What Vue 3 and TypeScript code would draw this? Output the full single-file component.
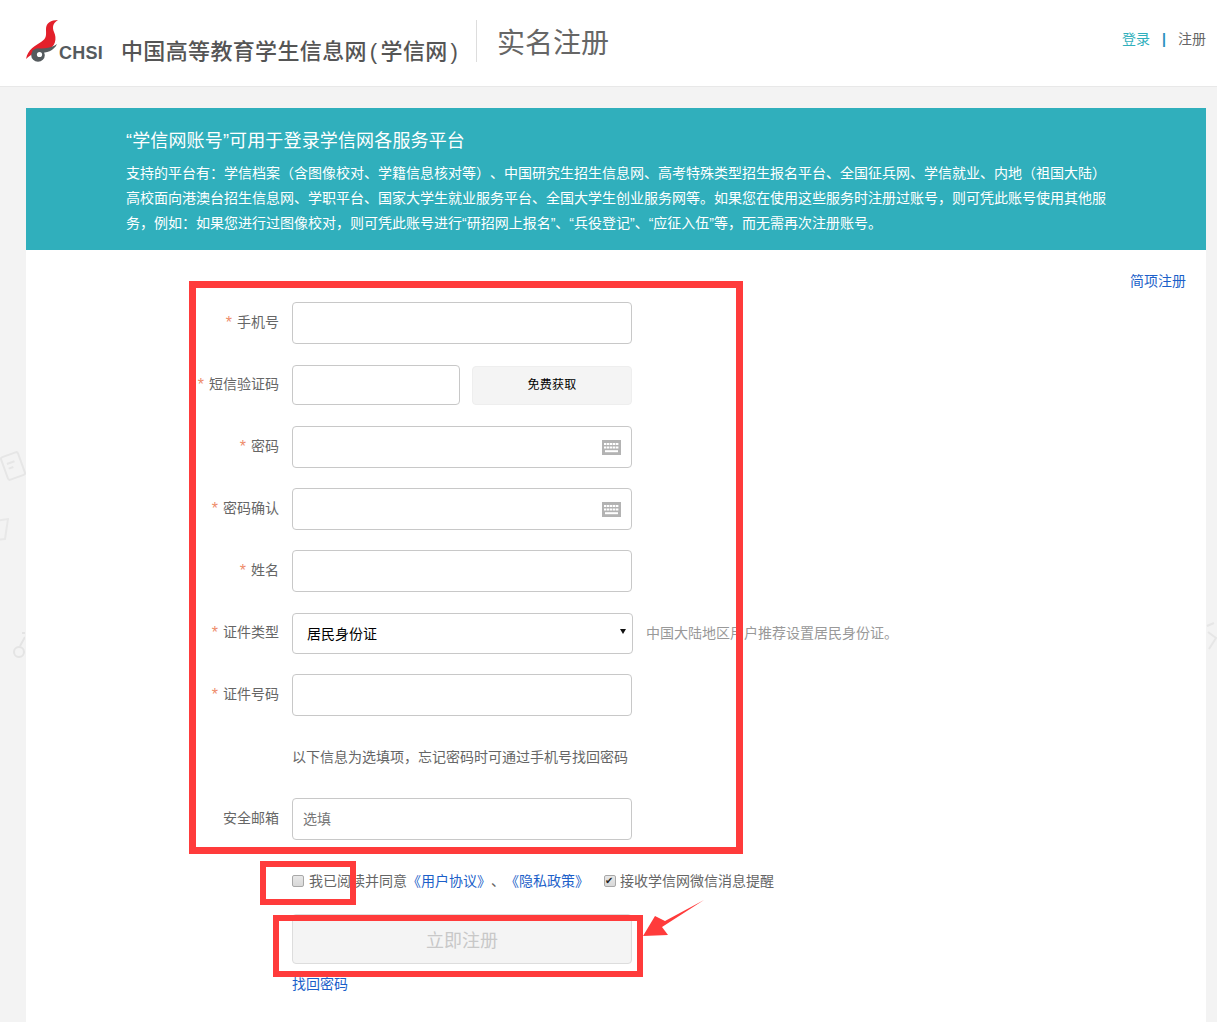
<script setup lang="ts">
interface Row {
  label: string
  required: boolean
  kind: 'text' | 'sms' | 'password' | 'select' | 'note' | 'email'
}

const rows: Row[] = [
  { label: '手机号', required: true, kind: 'text' },
  { label: '短信验证码', required: true, kind: 'sms' },
  { label: '密码', required: true, kind: 'password' },
  { label: '密码确认', required: true, kind: 'password' },
  { label: '姓名', required: true, kind: 'text' },
  { label: '证件类型', required: true, kind: 'select' },
  { label: '证件号码', required: true, kind: 'text' },
  { label: '', required: false, kind: 'note' },
  { label: '安全邮箱', required: false, kind: 'email' },
]

const keyRows = [3, 6.5]
const keyCols = [2, 5, 8, 11, 14]
</script>

<template>
  <div class="page">
    <svg class="deco deco-a" viewBox="0 0 26 34" width="26" height="34">
      <g transform="rotate(-20 13 17)" fill="none" stroke="#e6e6e6" stroke-width="2">
        <rect x="4" y="5" width="18" height="24" rx="2" />
        <path d="M8 13h8M8 18h5" />
      </g>
    </svg>
    <svg class="deco deco-b" viewBox="0 0 9 24" width="9" height="24">
      <path d="M-4 3 8 1 5 21-6 22Z" fill="none" stroke="#e8e8e8" stroke-width="2" />
    </svg>
    <svg class="deco deco-c" viewBox="0 0 12 30" width="12" height="30">
      <circle cx="6" cy="23" r="5" fill="none" stroke="#e4e4e4" stroke-width="2" />
      <path d="M7 17 12 8M9 4h3" fill="none" stroke="#e4e4e4" stroke-width="2" />
    </svg>
    <svg class="deco deco-d" viewBox="0 0 11 30" width="11" height="30">
      <path d="M1 4 8 1M2 10 10 16 3 27" fill="none" stroke="#e6e6e6" stroke-width="2" />
    </svg>

    <header class="topbar">
      <div class="brand">
        <svg class="flame" viewBox="0 0 34 42" width="34" height="42">
          <path d="M32 0C25 0 20 3 20 9c0 6 1 9-5 13C9 26 2 29 0 39c6-6 13-8 20-9 10-2 11-12 8-18-2-5-1-9 4-12Z" fill="#e3202b" />
          <path d="M6 31c8-4 18-1 25-7-3 7-11 9-17 9Z" fill="#555b5e" />
          <circle cx="12" cy="35" r="6.8" fill="#555b5e" />
          <circle cx="13.5" cy="34.5" r="2.6" fill="#fff" />
        </svg>
        <span class="chsi">CHSI</span>
      </div>
      <div class="site-name">中国高等教育学生信息网<span class="paren">(</span>学信网<span class="paren">)</span></div>
      <div class="divider"></div>
      <h1 class="page-title">实名注册</h1>
      <nav class="account">
        <a class="login">登录</a>
        <span class="sep">|</span>
        <a class="reg">注册</a>
      </nav>
    </header>

    <div class="content">
      <section class="banner">
        <h2>“学信网账号”可用于登录学信网各服务平台</h2>
        <p>支持的平台有：学信档案（含图像校对、学籍信息核对等）、中国研究生招生信息网、高考特殊类型招生报名平台、全国征兵网、学信就业、内地（祖国大陆）</p>
        <p>高校面向港澳台招生信息网、学职平台、国家大学生就业服务平台、全国大学生创业服务网等。如果您在使用这些服务时注册过账号，则可凭此账号使用其他服</p>
        <p>务，例如：如果您进行过图像校对，则可凭此账号进行“研招网上报名”、“兵役登记”、“应征入伍”等，而无需再次注册账号。</p>
      </section>

      <main class="panel">
        <div class="quick"><a>简项注册</a></div>

        <form class="form" @submit.prevent>
          <div v-for="row in rows" :key="row.kind + row.label" class="row">
            <label class="label">
              <span v-if="row.required" class="star">*</span>{{ row.label }}
            </label>

            <div v-if="row.kind === 'text'" class="field"><input class="input" type="text" /></div>

            <div v-else-if="row.kind === 'sms'" class="field sms">
              <input class="input short" type="text" />
              <button type="button" class="free">免费获取</button>
            </div>

            <div v-else-if="row.kind === 'password'" class="field">
              <input class="input" type="password" />
              <svg class="kbd" viewBox="0 0 19 15" width="19" height="15">
                <rect width="19" height="15" fill="#b3b3b3" />
                <template v-for="y in keyRows" :key="y">
                  <rect v-for="x in keyCols" :key="x" :x="x" :y="y" width="2.4" height="2" fill="#fff" />
                </template>
                <rect x="3" y="10.2" width="13" height="2" fill="#fff" />
              </svg>
            </div>

            <div v-else-if="row.kind === 'select'" class="field select-field">
              <select class="select">
                <option>居民身份证</option>
              </select>
              <span class="caret"></span>
              <span class="hint">中国大陆地区用户推荐设置居民身份证。</span>
            </div>

            <div v-else-if="row.kind === 'note'" class="note">以下信息为选填项，忘记密码时可通过手机号找回密码</div>

            <div v-else class="field"><input class="input email" type="text" placeholder="选填" /></div>
          </div>

          <div class="agree">
            <input class="check" type="checkbox" />
            <span class="agree-text">我已阅读并同意</span>
            <a class="doc">《用户协议》</a>
            <span class="comma">、</span>
            <a class="doc">《隐私政策》</a>
            <input class="check second" type="checkbox" checked />
            <span class="agree-text">接收学信网微信消息提醒</span>
          </div>

          <button type="button" class="submit" disabled>立即注册</button>
          <a class="recover">找回密码</a>
        </form>
      </main>
    </div>

    <div class="mark mark-form"></div>
    <div class="mark mark-check"></div>
    <div class="mark mark-submit"></div>
    <svg class="arrow" viewBox="0 0 64 40" width="64" height="40">
      <path d="M63 0 24 21 14 16 2 36 27 35 21 27Z" fill="#ff3b3b" />
    </svg>
  </div>
</template>

<style>
html,
body {
  margin: 0;
  background: #f3f3f3;
}
</style>

<style scoped>
.page {
  position: relative;
  display: flex;
  flex-direction: column;
  height: 1022px;
  overflow: hidden;
  background: #f3f3f3;
  font-family: "Liberation Sans", "Noto Sans CJK SC", sans-serif;
  font-size: 14px;
  color: #666;
  text-spacing-trim: space-all;
}

.deco { position: absolute; }
.deco-a { left: 0; top: 449px; }
.deco-b { left: 0; top: 518px; }
.deco-c { left: 13px; top: 629px; }
.deco-d { left: 1206px; top: 622px; }

.topbar {
  display: flex;
  align-items: flex-start;
  box-sizing: border-box;
  height: 87px;
  padding: 0 11px 0 26px;
  background: #fff;
  border-bottom: 1px solid #e8e8e8;
}
.brand {
  display: flex;
  align-items: flex-end;
  width: 96px;
  height: 62px;
  padding-top: 20px;
  box-sizing: border-box;
}
.flame { flex: none; }
.chsi {
  margin: 0 0 0 -1px;
  font-size: 18px;
  font-weight: 700;
  line-height: 20px;
  letter-spacing: 0.25px;
  color: #555b5e;
  transform: translateY(1px);
}
.site-name {
  width: 354px;
  margin: 36px 0 0 -1px;
  padding-right: 1px;
  font-size: 22px;
  line-height: 32px;
  letter-spacing: 0.35px;
  font-weight: 500;
  color: #555;
  white-space: nowrap;
}
.paren {
  margin: 0 3px;
  font-weight: 400;
}
.divider {
  width: 1px;
  height: 42px;
  margin-top: 20px;
  background: #ddd;
}
.page-title {
  margin: 23px 0 0 20px;
  font-size: 28px;
  font-weight: 400;
  line-height: 42px;
  color: #666;
}
.account {
  display: flex;
  gap: 12px;
  margin: 29px 0 0 auto;
  line-height: 20px;
}
.login { color: #30afbc; }
.sep {
  color: #2a8fc0;
  font-weight: 700;
}
.reg { color: #666; }

.content {
  display: flex;
  flex: 1;
  flex-direction: column;
  margin: 21px 11px 0 26px;
  min-height: 0;
}
.banner {
  box-sizing: border-box;
  height: 142px;
  padding: 19px 0 0 100px;
  background: #30afbc;
  color: #fff;
}
.banner h2 {
  margin: 0 0 6px;
  font-size: 18px;
  font-weight: 400;
  line-height: 28px;
  letter-spacing: 0.15px;
}
.banner p {
  margin: 0;
  font-size: 14px;
  line-height: 25px;
  white-space: nowrap;
}

.panel {
  flex: 1;
  background: #fff;
  padding-top: 22px;
}
.quick {
  height: 18px;
  margin-bottom: 12px;
  padding-right: 20px;
  text-align: right;
  line-height: 18px;
}
.quick a { color: #1c5fc9; }

.row {
  display: flex;
  align-items: center;
  height: 42px;
  margin-bottom: 20px;
}
.label {
  flex: none;
  box-sizing: border-box;
  width: 253px;
  margin-right: 13px;
  padding-bottom: 3px;
  text-align: right;
  line-height: 20px;
  white-space: nowrap;
}
.star {
  display: inline-block;
  margin-right: 5px;
  font-size: 16px;
  line-height: 14px;
  color: #ee8c6a;
  transform: translateY(1px);
}
.field {
  position: relative;
  display: flex;
  align-items: center;
  width: 340px;
}
.input {
  display: block;
  box-sizing: border-box;
  width: 340px;
  height: 42px;
  padding: 0 10px;
  background: #fff;
  border: 1px solid #c8c8c8;
  border-radius: 4px;
  outline: none;
  font: inherit;
  color: #333;
}
.input.short {
  width: 168px;
  height: 40px;
  margin-right: 12px;
}
.input.email::placeholder {
  color: #777;
  opacity: 1;
}
.free {
  box-sizing: border-box;
  width: 160px;
  height: 39px;
  padding: 0 0 3px;
  background: #f4f4f4;
  border: 1px solid #eee;
  border-radius: 4px;
  font-family: inherit;
  font-size: 12px;
  letter-spacing: 0.25px;
  color: #000;
}
.kbd {
  position: absolute;
  right: 11px;
  top: 14px;
}
.select-field {
  white-space: nowrap;
}
.select {
  flex: none;
  box-sizing: border-box;
  width: 341px;
  height: 41px;
  margin-top: 1px;
  padding: 0 14px;
  background: #fff;
  border: 1px solid #c8c8c8;
  border-radius: 4px;
  appearance: none;
  font: inherit;
  color: #000;
}
.caret {
  position: absolute;
  left: 328px;
  top: 17px;
  width: 0;
  height: 0;
  border-left: 3px solid transparent;
  border-right: 3px solid transparent;
  border-top: 5px solid #111;
}
.hint {
  flex: none;
  margin-left: 13px;
  color: #999;
  line-height: 20px;
}
.note {
  line-height: 20px;
  white-space: nowrap;
}

.agree {
  display: flex;
  align-items: center;
  height: 20px;
  margin-top: 31px;
  padding-left: 266px;
  line-height: 20px;
  white-space: nowrap;
}
.check {
  position: relative;
  flex: none;
  box-sizing: border-box;
  width: 12px;
  height: 12px;
  margin: 0 5px 0 0;
  appearance: none;
  background: linear-gradient(#e8e8e8, #d8d8d8);
  border: 1px solid #a8a8a8;
  border-radius: 2px;
}
.check.second {
  margin-left: 15px;
  margin-right: 4px;
}
.check:checked::after {
  content: "✔";
  position: absolute;
  left: 0;
  top: -1px;
  font-family: "DejaVu Sans", sans-serif;
  font-size: 10px;
  line-height: 12px;
  color: #222;
}
.doc { color: #1c5fc9; }
.comma { color: #666; }

.submit {
  display: block;
  box-sizing: border-box;
  width: 340px;
  height: 50px;
  margin: 23px 0 0 266px;
  padding: 0;
  background: #f4f4f4;
  border: 1px solid #ddd;
  border-radius: 4px;
  font-family: inherit;
  font-size: 18px;
  color: #c8c8c8;
}
.recover {
  display: block;
  margin: 10px 0 0 266px;
  line-height: 20px;
  color: #1c5fc9;
}

.mark {
  position: absolute;
  box-sizing: border-box;
  border-style: solid;
  border-color: #ff3b3b;
  pointer-events: none;
}
.mark-form {
  left: 189px;
  top: 281px;
  width: 554px;
  height: 573px;
  border-width: 7px;
}
.mark-check {
  left: 260px;
  top: 861px;
  width: 96px;
  height: 44px;
  border-width: 6px;
}
.mark-submit {
  left: 273px;
  top: 915px;
  width: 370px;
  height: 62px;
  border-width: 6px;
}
.arrow {
  position: absolute;
  left: 641px;
  top: 900px;
  pointer-events: none;
}
</style>
